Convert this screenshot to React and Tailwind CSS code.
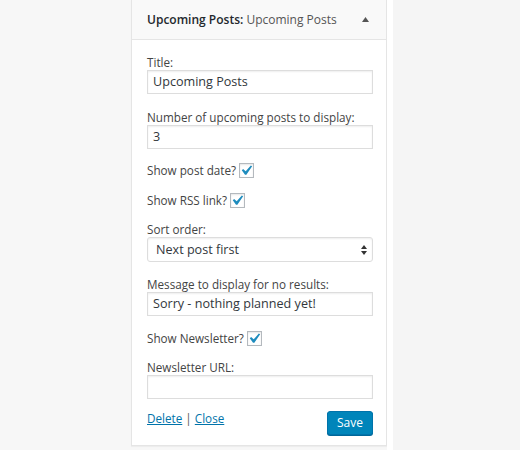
import React from 'react';

const Check = () => (
    <span className="ml-[3px] inline-flex h-[15px] w-[15px] items-center justify-center border border-[#b4b9be] bg-white shadow-[inset_0_1px_2px_rgba(0,0,0,0.1)]">
        <svg width="13" height="13" viewBox="4 3.5 13 13">
            <path d="M14.83 4.89l1.34.94-5.81 8.38H9.02L5.78 9.67l1.34-1.25 2.57 2.4z" fill="#1e8cbe" />
        </svg>
    </span>
);

const TextField = ({ value }) => (
    <div className="h-[24px] w-[226px] border border-[#ddd] bg-white px-[5px] text-[12.6px] leading-[22px] text-[#32373c] shadow-[inset_0_1px_2px_rgba(0,0,0,0.07)]">
        {value}
    </div>
);

const Label = ({ children, className = '' }) => (
    <div className={'text-[11.7px] leading-[16px] text-[#444] ' + className}>{children}</div>
);

const CheckRow = ({ label, className = '' }) => (
    <div className={'flex h-[16px] items-center text-[11.7px] leading-[16px] text-[#444] ' + className}>
        <span>{label}</span>
        <Check />
    </div>
);

const App = () => {
    return (
        <div className="flex h-[450px] w-[520px] bg-[#f7f7f7] font-['Open_Sans',sans-serif]">
            <div className="w-[131px] shrink-0" />
            <div className="flex h-[446px] w-[256px] shrink-0 flex-col border-x border-b border-[#e5e5e5] bg-white shadow-[0_1px_1px_rgba(0,0,0,0.04)]">
                <div className="flex items-start justify-between border-b border-[#e5e5e5] bg-[#f9f9f9] pl-[15px] pr-[17px] pt-[11px] pb-[11px]">
                    <div className="text-[12px] leading-[17px]">
                        <span className="font-semibold text-[#23282d]">Upcoming Posts:</span>
                        <span className="text-[#555]"> Upcoming Posts</span>
                    </div>
                    <svg width="7" height="5" viewBox="0 0 7 5" className="mt-[6px]">
                        <polygon points="3.5,0 7,5 0,5" fill="#555" />
                    </svg>
                </div>

                <div className="flex flex-col pl-[15px]">
                    <Label className="mt-[14px]">Title:</Label>
                    <TextField value="Upcoming Posts" />

                    <Label className="mt-[15px]">Number of upcoming posts to display:</Label>
                    <TextField value="3" />

                    <CheckRow label="Show post date?" className="mt-[13px]" />
                    <CheckRow label="Show RSS link?" className="mt-[14px]" />

                    <Label className="mt-[13px]">Sort order:</Label>
                    <div className="flex h-[25px] w-[226px] items-center justify-between rounded-[3px] border border-[#ddd] bg-white pl-[8px] pr-[5px] text-[12.6px] leading-[23px] text-[#32373c] shadow-[inset_0_1px_2px_rgba(0,0,0,0.07)]">
                        <span>Next post first</span>
                        <svg width="6" height="10" viewBox="0 0 6 10">
                            <polygon points="3,0 6,4 0,4" fill="#333" />
                            <polygon points="0,6 6,6 3,10" fill="#333" />
                        </svg>
                    </div>

                    <Label className="mt-[14px]">Message to display for no results:</Label>
                    <TextField value="Sorry - nothing planned yet!" />

                    <CheckRow label="Show Newsletter?" className="mt-[14px]" />

                    <Label className="mt-[13px]">Newsletter URL:</Label>
                    <TextField value="" />

                    <div className="mt-[11px] flex w-[226px] items-start justify-between">
                        <div className="text-[11.7px] leading-[16px] text-[#555]">
                            <a href="#" className="text-[#0073aa] underline">Delete</a>
                            <span> | </span>
                            <a href="#" className="text-[#0073aa] underline">Close</a>
                        </div>
                        <button className="mt-[1px] h-[24px] rounded-[3px] border border-[#0073aa] bg-[#0085ba] px-[9px] text-[12px] leading-[22px] text-white shadow-[0_1px_0_#006799]">
                            Save
                        </button>
                    </div>
                </div>
            </div>
            <div className="w-[6px] shrink-0 bg-white" />
            <div className="flex-1 bg-[#f5f5f5]" />
        </div>
    );
};

export default App;
